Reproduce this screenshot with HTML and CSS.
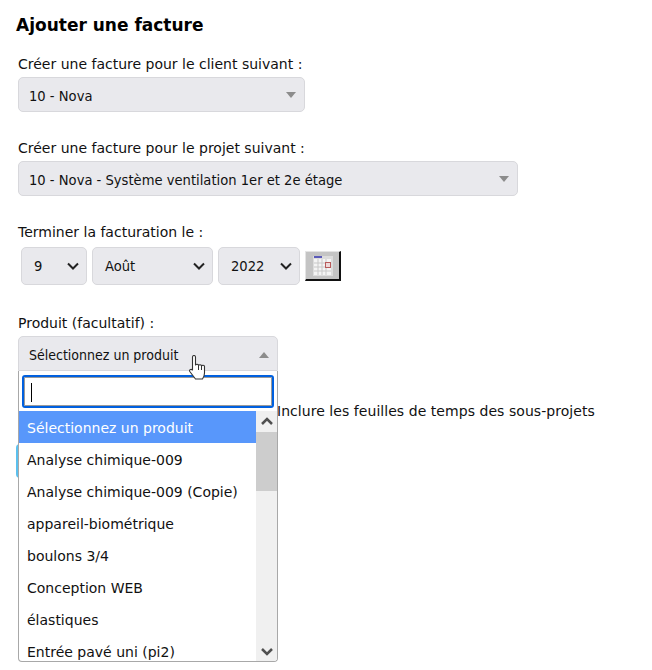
FILE: index.html
```html
<!DOCTYPE html>
<html lang="fr">
<head>
    <meta charset="UTF-8">
    <title>Ajouter une facture</title>
    <link rel="stylesheet" href="styles.css">
</head>
<body>

<div class="page">
    <h1>Ajouter une facture</h1>

    <!--Client-->
    <div class="field field-client">
        <label>Créer une facture pour le client suivant :</label>
        <div class="combo combo-client">
            <span>10 - Nova</span>
            <svg class="caret" width="10" height="6" viewBox="0 0 12 7"><path d="M0 0h12L6 7z"/></svg>
        </div>
    </div>

    <!--Project-->
    <div class="field field-project">
        <label>Créer une facture pour le projet suivant :</label>
        <div class="combo combo-project">
            <span>10 - Nova - Système ventilation 1er et 2e étage</span>
            <svg class="caret" width="10" height="6" viewBox="0 0 12 7"><path d="M0 0h12L6 7z"/></svg>
        </div>
    </div>

    <!--End date-->
    <div class="field field-date">
        <label>Terminer la facturation le :</label>
        <div class="date-row">
            <div class="date-box date-day">
                <span>9</span>
                <svg class="chevron" width="12" height="8" viewBox="0 0 12 8"><path d="M1 1.500l5 5 5-5"/></svg>
            </div>
            <div class="date-box date-month">
                <span>Août</span>
                <svg class="chevron" width="12" height="8" viewBox="0 0 12 8"><path d="M1 1.500l5 5 5-5"/></svg>
            </div>
            <div class="date-box date-year">
                <span>2022</span>
                <svg class="chevron" width="12" height="8" viewBox="0 0 12 8"><path d="M1 1.500l5 5 5-5"/></svg>
            </div>
            <button class="cal-button">
                <svg width="20" height="20" viewBox="0 0 20 20">
                    <rect x="0" y="0" width="20" height="20" fill="#dcdcdc"/>
                    <rect x="1" y="3" width="17" height="16" fill="#f4f4f4"/>
                    <rect x="1" y="0" width="8" height="2" fill="#5a5ab8"/>
                    <path d="M5 3v16M9 3v16M13 3v16M1 7h17M1 11h17M1 15h17" stroke="#c8c8c8" stroke-width="1" fill="none"/>
                    <rect x="12.500" y="6.500" width="5" height="5" fill="#eed8d8" stroke="#b85a5a"/>
                </svg>
            </button>
        </div>
    </div>

    <!--Product-->
    <div class="field field-product">
        <label>Produit (facultatif) :</label>
        <div class="product-wrap">
            <div class="combo combo-product">
                <span>Sélectionnez un produit</span>
                <svg class="caret" width="10" height="6" viewBox="0 0 12 7"><path d="M6 0l6 7H0z"/></svg>
            </div>

            <div class="dropdown">
                <div class="search-box"><div class="search-text"></div></div>
                <div class="list-wrap">
                    <ul class="options">
                        <li class="active">Sélectionnez un produit</li>
                        <li>Analyse chimique-009</li>
                        <li>Analyse chimique-009 (Copie)</li>
                        <li>appareil-biométrique</li>
                        <li>boulons 3/4</li>
                        <li>Conception WEB</li>
                        <li>élastiques</li>
                        <li>Entrée pavé uni (pi2)</li>
                    </ul>
                    <div class="scrollbar">
                        <svg class="scroll-arrow" width="12" height="8" viewBox="0 0 12 8"><path d="M1 7l5-5 5 5"/></svg>
                        <div class="scroll-thumb"></div>
                        <svg class="scroll-arrow arrow-down" width="12" height="8" viewBox="0 0 12 8"><path d="M1 1l5 5 5-5"/></svg>
                    </div>
                </div>
            </div>

            <!--Mouse pointer-->
            <svg class="hand" width="18" height="26" viewBox="0 0 18 26">
                <path d="M3.500 2c0-2 3-2 3 0v8c.5-1 2.500-1 3 0v.5c.5-1 2.500-1 3 0v.5c.5-1 3-1 3 .5v6.500c0 2.500-1 4.500-2 6H6.500C5 22 3 19.500.8 16.500c-.8-1.500 1-3 2.700-1.500z" fill="#fff" stroke="#333" stroke-width="1.100" stroke-linejoin="round"/>
                <path d="M9.500 10.500v4.500M12.500 11v4" stroke="#333" stroke-width="1" fill="none"/>
            </svg>
        </div>
    </div>

    <!--Behind the open list-->
    <div class="include-row">Inclure les feuilles de temps des sous-projets</div>
    <div class="submit-btn"></div>
</div>

</body>
</html>
```

FILE: styles.css
```css
/* Page reset */
body {
    margin: 0;
    background-color: #fff;
    color: #111;
    font-family: "DejaVu Sans", Verdana, sans-serif;
    font-size: 14px;
}

.page {
    height: 670px;
    overflow: hidden;
    padding: 14px 0 0 18px;
    box-sizing: border-box;
}

h1 {
    margin: 0 0 0 -2px;
    font-size: 17px;
    line-height: 22px;
    color: #000;
}

label {
    display: block;
    font-size: 14px;
    line-height: 18px;
}

.field-client {
    margin-top: 19px;
}

.field-project {
    margin-top: 27px;
}

.field-date {
    margin-top: 27px;
}

.field-product {
    margin-top: 29px;
}

/* Grey select boxes */
.combo {
    display: flex;
    justify-content: space-between;
    align-items: center;
    height: 35px;
    box-sizing: border-box;
    margin-top: 4px;
    padding: 1px 8px 0 10px;
    background-color: #e9e9ed;
    border: 1px solid #d8d8dc;
    border-radius: 5px;
    font-family: "DejaVu Sans", sans-serif;
    font-stretch: condensed;
    font-size: 14.6px;
}

.combo-client {
    width: 287px;
}

.combo-project {
    width: 500px;
}

.combo-product {
    width: 260px;
    margin-top: 4px;
    padding-top: 2px;
    border-radius: 5px 5px 0 0;
    font-size: 14px;
}

.caret {
    fill: #8c8c8c;
}

/* Date selects */
.date-row {
    display: flex;
    align-items: center;
    gap: 5px;
    margin: 6px 0 0 3px;
}

.date-box {
    display: flex;
    justify-content: space-between;
    align-items: center;
    height: 38px;
    box-sizing: border-box;
    padding: 0 7px 1px 12px;
    background-color: #e9e9ed;
    border: 1px solid #d8d8dc;
    border-radius: 5px;
    font-family: "DejaVu Sans", sans-serif;
    font-stretch: condensed;
    font-size: 14.6px;
}

.date-day {
    width: 66px;
}

.date-month {
    width: 121px;
}

.date-year {
    width: 82px;
}

.chevron {
    fill: none;
    stroke: #222;
    stroke-width: 2;
}

.cal-button {
    display: flex;
    align-items: center;
    justify-content: center;
    width: 36px;
    height: 30px;
    box-sizing: border-box;
    padding: 0;
    background-color: #c4c4c4;
    border-style: solid;
    border-width: 1px 2px 2px 1px;
    border-color: #e4e4e4 #111 #111 #e4e4e4;
}

/* Open product list */
.product-wrap {
    position: relative;
    width: 260px;
}

.dropdown {
    position: absolute;
    z-index: 2;
    top: 35px;
    left: 0;
    width: 260px;
    height: 291px;
    box-sizing: border-box;
    overflow: hidden;
    background-color: #fff;
    border: 1px solid #a8a8a8;
    border-top: none;
    border-radius: 0 0 4px 4px;
}

.search-box {
    height: 33px;
    box-sizing: border-box;
    margin: 4px 3px 3px 3px;
    padding: 7px 7px;
    background-color: #fff;
    border: 2px solid #0060df;
    border-radius: 3px;
    box-shadow: inset 0 0 0 1px #9a9a9a;
}

.search-text {
    width: 1px;
    height: 19px;
    margin-top: -1px;
    background-color: #000;
}

.list-wrap {
    display: flex;
}

.options {
    flex: 1;
    margin: 0;
    padding: 0;
    list-style: none;
}

.options li {
    height: 32px;
    padding-left: 8px;
    font-size: 14px;
    line-height: 34px;
    white-space: nowrap;
}

.options li.active {
    background-color: #5897fb;
    color: #fff;
}

.scrollbar {
    position: relative;
    width: 21px;
    height: 251px;
    background-color: #f0f0f0;
}

.scroll-arrow {
    position: absolute;
    top: 6px;
    left: 5px;
    fill: none;
    stroke: #505050;
    stroke-width: 2.500;
}

.arrow-down {
    top: auto;
    bottom: 6px;
}

.scroll-thumb {
    position: absolute;
    top: 21px;
    left: 0;
    width: 21px;
    height: 59px;
    background-color: #cdcdcd;
}

.hand {
    position: absolute;
    z-index: 3;
    top: 19px;
    left: 171px;
}

/* Content covered by the list */
.include-row {
    margin: 31px 0 0 259px;
    line-height: 18px;
    letter-spacing: 0.05px;
    white-space: nowrap;
}

.submit-btn {
    width: 60px;
    height: 34px;
    margin: 24px 0 0 -2px;
    background-color: #5bc0ee;
    border-radius: 4px;
}
```
